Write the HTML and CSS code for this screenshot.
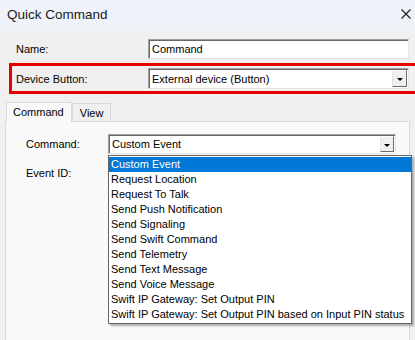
FILE: index.html
```html
<!DOCTYPE html>
<html lang="en">
<head>
    <meta charset="UTF-8">
    <title>Quick Command</title>
    <link rel="stylesheet" href="styles.css">
</head>
<body>
    <div class="window">
        <div class="titlebar">
            <span class="title">Quick Command</span>
            <svg class="close" width="10" height="10" viewBox="0 0 10 10">
                <path d="M0.5 0.5 L9.5 9.5 M9.5 0.5 L0.5 9.5" stroke="#1a1a1a" stroke-width="1.1" fill="none"/>
            </svg>
        </div>

        <div class="field-row name-row">
            <label>Name:</label>
            <div class="textbox">Command</div>
        </div>

        <div class="field-row device-row">
            <label>Device Button:</label>
            <div class="combo">
                <span class="combo-text">External device (Button)</span>
                <span class="combo-btn"><i class="arrow"></i></span>
            </div>
        </div>

        <div class="tabs">
            <div class="tab active">Command</div>
            <div class="tab">View</div>
        </div>

        <div class="panel">
            <div class="panel-row">
                <label>Command:</label>
                <div class="combo command-combo">
                    <span class="combo-text">Custom Event</span>
                    <span class="combo-btn"><i class="arrow"></i></span>
                </div>
            </div>
            <div class="panel-row">
                <label>Event ID:</label>
            </div>

            <!-- lista desplegada del combo -->
            <ul class="dropdown">
                <li class="selected">Custom Event</li>
                <li>Request Location</li>
                <li>Request To Talk</li>
                <li>Send Push Notification</li>
                <li>Send Signaling</li>
                <li>Send Swift Command</li>
                <li>Send Telemetry</li>
                <li>Send Text Message</li>
                <li>Send Voice Message</li>
                <li>Swift IP Gateway: Set Output PIN</li>
                <li>Swift IP Gateway: Set Output PIN based on Input PIN status</li>
            </ul>
        </div>
    </div>
</body>
</html>
```

FILE: styles.css
```css
body {
    margin: 0;
    font-family: "Liberation Sans", Arial, sans-serif;
    font-size: 11px;
    color: #000;
    background-color: #f0f0f0;
}

.window {
    width: 415px;
    height: 340px;
    overflow: hidden;
    background-color: #f0f0f0;
    position: relative;
}

.titlebar {
    height: 30px;
    display: flex;
    align-items: center;
    justify-content: space-between;
    padding: 0 4px 0 7px;
    background-color: #eff3f9;
    box-sizing: border-box;
}

.title {
    font-size: 13.5px;
    color: #1a1a1a;
    margin-bottom: 1px;
}

.close {
    margin-bottom: 2px;
}

.field-row {
    display: flex;
    align-items: center;
}

.field-row label {
    width: 132px;
}

.name-row {
    margin-top: 9px;
    padding-left: 16px;
}

.textbox {
    width: 261px;
    height: 20px;
    box-sizing: border-box;
    background-color: #fff;
    border: 1px solid;
    border-color: #a0a0a0 #e3e3e3 #e3e3e3 #a0a0a0;
    box-shadow: inset 1px 1px 0 #696969;
    padding: 3px 0 0 3px;
}

.device-row {
    margin-top: 4px;
    margin-left: 9px;
    width: 410px;
    height: 31px;
    box-sizing: border-box;
    border: 3px solid #e60000;
    padding-left: 4px;
}

.combo {
    width: 261px;
    height: 21px;
    box-sizing: border-box;
    background-color: #fff;
    border: 1px solid;
    border-color: #a0a0a0 #e3e3e3 #e3e3e3 #a0a0a0;
    box-shadow: inset 1px 1px 0 #696969;
    display: flex;
    align-items: center;
    justify-content: space-between;
}

.combo-text {
    padding-left: 3px;
}

.combo-btn {
    width: 15px;
    height: 17px;
    margin-right: 1px;
    box-sizing: border-box;
    background-color: #f0f0f0;
    border: 1px solid;
    border-color: #fff #696969 #696969 #e3e3e3;
    display: flex;
    align-items: center;
    justify-content: center;
}

.arrow {
    width: 0;
    height: 0;
    border-left: 3px solid transparent;
    border-right: 3px solid transparent;
    border-top: 3px solid #000;
    margin-top: 2px;
}

.tabs {
    display: flex;
    align-items: flex-end;
    margin-top: 7px;
    padding-left: 6px;
    height: 20px;
}

.tab {
    height: 18px;
    box-sizing: border-box;
    padding: 3px 7px 0;
    border: 1px solid #d9d9d9;
    border-bottom: none;
    background-color: #f0f0f0;
}

.tab.active {
    height: 20px;
    padding: 3px 7px 0 6px;
    background-color: #f9f9f9;
    position: relative;
    top: 1px;
    z-index: 1;
}

.panel {
    margin-left: 5px;
    width: 405px;
    height: 230px;
    box-sizing: border-box;
    border: 1px solid #d9d9d9;
    background-color: #f9f9f9;
    position: relative;
    padding-top: 12px;
}

.panel-row {
    display: flex;
    align-items: center;
    padding-left: 20px;
    height: 20px;
    margin-bottom: 9px;
}

.panel-row label {
    width: 82px;
}

.command-combo {
    width: 288px;
    height: 20px;
}

.command-combo .combo-btn {
    height: 16px;
    width: 14px;
}

.dropdown {
    position: absolute;
    left: 102px;
    top: 33px;
    width: 304px;
    margin: 0;
    padding: 1px 0;
    list-style: none;
    background-color: #fff;
    border: 1px solid #646464;
    box-sizing: border-box;
    box-shadow: 2px 2px 2px rgba(0, 0, 0, 0.3);
}

.dropdown li {
    height: 15px;
    line-height: 15px;
    padding-left: 2px;
    white-space: nowrap;
}

.dropdown li.selected {
    background-color: #0078d7;
    color: #fff;
}
```
